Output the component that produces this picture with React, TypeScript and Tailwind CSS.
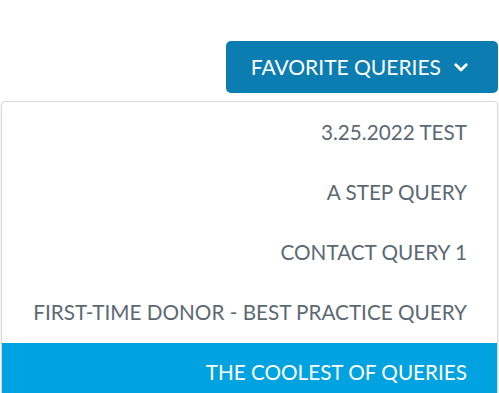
export default function App() {
  const queries = ["3.25.2022 TEST", "A STEP QUERY", "CONTACT QUERY 1", "FIRST-TIME DONOR - BEST PRACTICE QUERY", "THE COOLEST OF QUERIES"];
  const active = 4;

  return (
    <div className="flex h-[393px] w-[499px] flex-col items-end overflow-hidden bg-white pt-[41px] pr-[1px] pl-[1px] font-['Lato',sans-serif]">
      <button className="flex h-[52px] shrink-0 items-center gap-[13px] rounded-[5px] bg-[#0b7db1] pr-[30px] pl-[25px] text-[21px] text-white">
        <span>FAVORITE QUERIES</span>
        <svg width="14" height="9" viewBox="0 0 14 9" fill="none" stroke="currentColor" strokeWidth="2.8" strokeLinecap="round" strokeLinejoin="round">
          <path d="M1.8 1.8l5.2 5.2 5.2-5.2" />
        </svg>
      </button>

      {/* Dropdown menu */}
      <ul className="mt-[8px] w-full shrink-0 rounded-t-[4px] border border-[#d9d9d9] bg-white pt-[1px] shadow-[0_2px_6px_rgba(0,0,0,0.08)]">
        {queries.map((q, i) => (
          <li
            key={q}
            className={
              i === active
                ? "flex h-[60px] items-center justify-end bg-[#00a3e0] pr-[30px] text-[20.7px] text-white"
                : "flex h-[60px] items-center justify-end pr-[30px] text-[20.7px] text-[#5c6973]"
            }
          >
            {q}
          </li>
        ))}
      </ul>
    </div>
  );
}
